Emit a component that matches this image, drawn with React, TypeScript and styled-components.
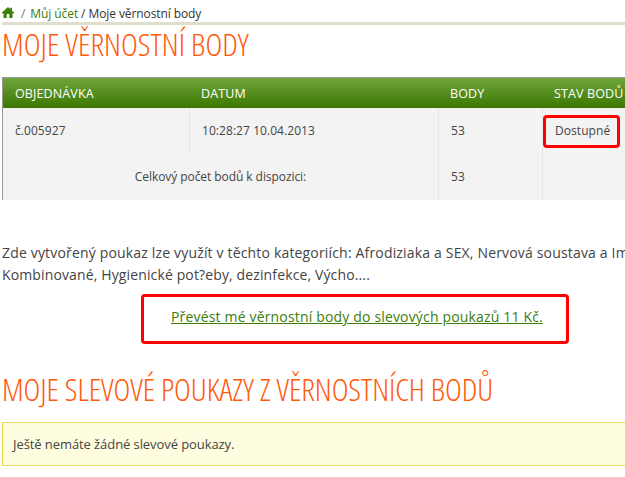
import React from "react";
import styled, { createGlobalStyle } from "styled-components";

const GlobalStyle = createGlobalStyle`
  body {
    margin: 0;
    background: #fff;
    color: #444;
    font-family: "Open Sans", "Noto Sans", sans-serif;
    overflow: hidden;
  }
`;

const Page = styled.main`
  width: 625px;
  height: 477px;
  padding-left: 2px;
  box-sizing: border-box;
  overflow: hidden;
`;

const Breadcrumb = styled.nav`
  display: flex;
  height: 22px;
  padding-top: 5px;
  box-sizing: border-box;
  font-size: 12px;
  line-height: 18px;
  letter-spacing: -0.09px;
  color: #333;
  white-space: pre;
`;

const HomeIcon = styled.svg`
  width: 12px;
  height: 11px;
  margin: 2px 7px 0 0;
  fill: #3c8207;
`;

const CrumbLink = styled.a`
  color: #3c7d0a;
`;

const Separator = styled.span<{ $muted?: boolean }>`
  color: ${(p) => (p.$muted ? "#777" : "#333")};
  margin-right: ${(p) => (p.$muted ? "-1px" : "0")};
`;

const Rule = styled.div`
  height: 3px;
  background: #e0dfcd;
`;

const Title = styled.h1<{ $spacing: string }>`
  margin: -3px 0 0;
  height: 44px;
  font-size: 32px;
  font-weight: 300;
  font-stretch: 75%;
  line-height: 44px;
  letter-spacing: ${(p) => p.$spacing};
  color: #ff5a0a;
  text-transform: uppercase;
  white-space: nowrap;
`;

const PointsTable = styled.section`
  width: 680px;
  margin-top: 11px;
  box-sizing: border-box;
  border-top: 1px solid #999;
  border-left: 1px solid #999;
  background: #f3f3f3;
  font-size: 12px;
`;

const HeaderRow = styled.div`
  display: grid;
  grid-template-columns: 186px 249px 104px 1fr;
  height: 30px;
  line-height: 31px;
  background: linear-gradient(#6fa53c, #3b7700);
  color: #fff;
`;

const HeaderCell = styled.div`
  padding-left: 12px;
  font-size: 12.5px;
  font-weight: 500;
  letter-spacing: 0.12px;
  white-space: nowrap;
`;

const Row = styled.div`
  display: grid;
  grid-template-columns: 187px 249px 104px 1fr;
  height: 46px;
  line-height: 46px;
  letter-spacing: 0.06px;
`;

const Cell = styled.div<{ $last?: boolean }>`
  position: relative;
  padding-left: 12px;
  box-sizing: border-box;
  border-right: ${(p) => (p.$last ? "0" : "1px solid #e6e6e6")};
`;

const TotalLabel = styled(Cell)`
  grid-column: span 2;
  padding-left: 0;
  letter-spacing: -0.07px;
  text-align: center;
`;

const StatusHighlight = styled.span`
  position: absolute;
  left: 0;
  top: 7px;
  width: 77px;
  height: 33px;
  box-sizing: border-box;
  border: 3px solid #f00;
  border-radius: 4px;
`;

const Note = styled.p`
  margin: 42px 0 0;
  font-size: 14px;
  line-height: 22px;
`;

const NoteLine = styled.span<{ $spacing: string }>`
  display: block;
  letter-spacing: ${(p) => p.$spacing};
  white-space: nowrap;
`;

const TransferBox = styled.div`
  width: 428px;
  height: 50px;
  margin: 8px 0 0 139px;
  padding-left: 27px;
  box-sizing: border-box;
  border: 3px solid #f00;
  border-radius: 4px;
  line-height: 40px;
  font-size: 14px;
  letter-spacing: 0.17px;
  white-space: nowrap;
`;

const TransferLink = styled.a`
  color: #3c7d0a;
  text-decoration: underline;
`;

const Vouchers = styled.section`
  padding-top: 26px;
`;

const Notice = styled.div`
  width: 680px;
  height: 44px;
  margin-top: 11px;
  padding-left: 10px;
  box-sizing: border-box;
  border: 1px solid #e6db55;
  background: #fffde0;
  font-size: 13px;
  line-height: 42px;
  letter-spacing: -0.08px;
`;

export default function App() {
  return (
    <>
      <GlobalStyle />
      <Page>
        <Breadcrumb>
          <HomeIcon viewBox="0 0 12 11">
            <path d="M6 0 8.2 2V.8H10V3.7L12 5.6V6.5H10.5V11H7.3V7H4.7V11H1.5V6.5H0V5.6Z" />
          </HomeIcon>
          <Separator $muted>/ </Separator>
          <CrumbLink> Můj účet</CrumbLink>
          <Separator> / </Separator>
          <span>Moje věrnostní body</span>
        </Breadcrumb>
        <Rule />
        <Title $spacing="0">Moje věrnostní body</Title>
        <PointsTable>
          <HeaderRow>
            <HeaderCell>OBJEDNÁVKA</HeaderCell>
            <HeaderCell>DATUM</HeaderCell>
            <HeaderCell>BODY</HeaderCell>
            <HeaderCell>STAV BODŮ</HeaderCell>
          </HeaderRow>
          <Row>
            <Cell>č.005927</Cell>
            <Cell>10:28:27 10.04.2013</Cell>
            <Cell>53</Cell>
            <Cell $last>
              Dostupné
              <StatusHighlight />
            </Cell>
          </Row>
          <Row>
            <TotalLabel>Celkový počet bodů k dispozici:</TotalLabel>
            <Cell>53</Cell>
            <Cell $last />
          </Row>
        </PointsTable>
        <Note>
          <NoteLine $spacing="0.17px">
            Zde vytvořený poukaz lze využít v těchto kategoriích: Afrodiziaka a SEX, Nervová soustava a Im
          </NoteLine>
          <NoteLine $spacing="0.13px">Kombinované, Hygienické pot?eby, dezinfekce, Výcho....</NoteLine>
        </Note>
        <TransferBox>
          <TransferLink>Převést mé věrnostní body do slevových poukazů 11 Kč.</TransferLink>
        </TransferBox>
        <Vouchers>
          <Title as="h2" $spacing="-0.1px">Moje slevové poukazy z věrnostních bodů</Title>
          <Notice>Ještě nemáte žádné slevové poukazy.</Notice>
        </Vouchers>
      </Page>
    </>
  );
}
